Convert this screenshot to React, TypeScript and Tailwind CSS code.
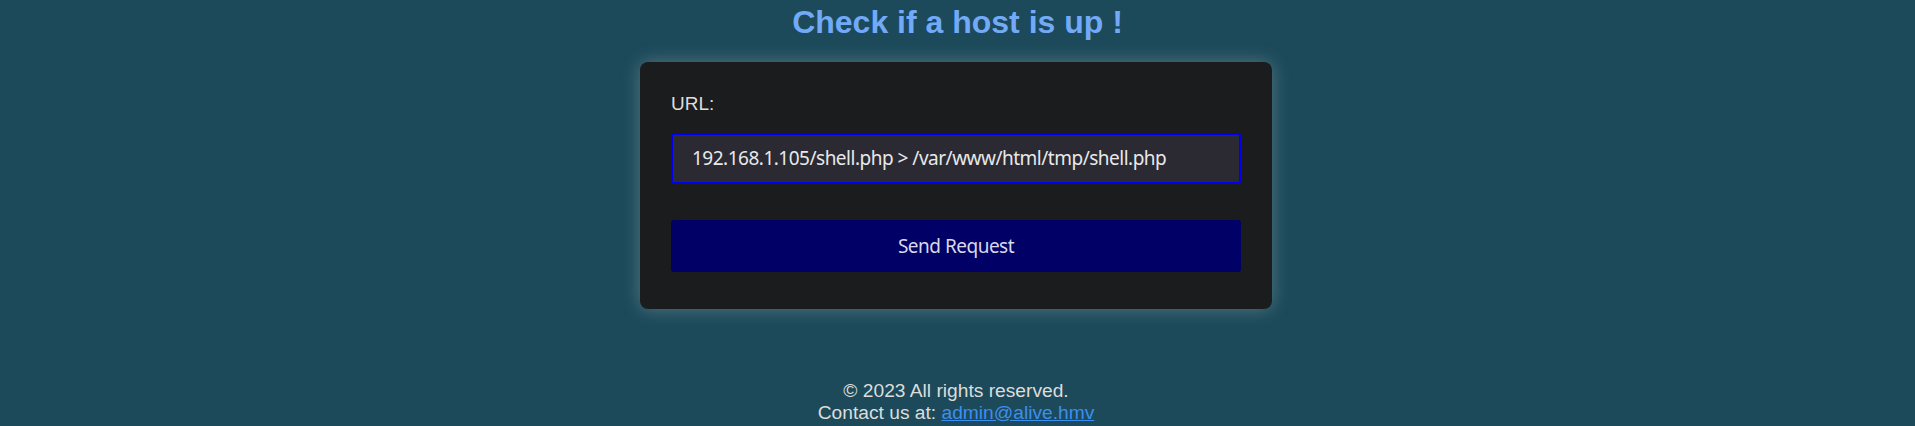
import React from 'react';

export default function App() {
  return (
    <div
      className="min-h-screen bg-[#1c4a5a] flex flex-col items-center"
      style={{ fontFamily: '"Liberation Sans", Arial, sans-serif' }}
    >
      {/* Title */}
      <h1 className="mt-[4px] text-[32px] font-bold leading-[36px] text-[#72aaf8]">
        Check if a host is up !
      </h1>

      {/* Form card */}
      <div className="mt-[22px] mr-[3px] w-[632px] rounded-lg bg-[#1b1c1e] px-[31px] pt-[31px] pb-[37px] shadow-[0_0_18px_rgba(190,200,205,0.35)]">
        <label className="block text-[19px] leading-[22px] text-[#dddddd]">URL:</label>
        <div className="mt-[18px] h-[51px] rounded-[3px] border-2 border-[#0000ee] bg-[#2b2a33] flex items-center pl-[19px]">
          <span
            className="text-[19px] text-[#e8e8ea] tracking-[-0.5px]"
            style={{ fontFamily: '"Noto Sans", sans-serif' }}
          >
            192.168.1.105/shell.php &gt; /var/www/html/tmp/shell.php
          </span>
        </div>
        <button
          className="mt-[36px] h-[52px] w-full rounded-[3px] bg-[#000066] text-[19px] text-[#d9d9ea] tracking-[-0.5px]"
          style={{ fontFamily: '"Noto Sans", sans-serif' }}
        >
          Send Request
        </button>
      </div>

      {/* Footer */}
      <footer className="mt-[71px] mr-[3px] text-center text-[19.2px] leading-[22px] text-[#dddddd]">
        <p>© 2023 All rights reserved.</p>
        <p>
          Contact us at: <a href="#" className="text-[#3c8ff0] underline">admin@alive.hmv</a>
        </p>
      </footer>
    </div>
  );
}
